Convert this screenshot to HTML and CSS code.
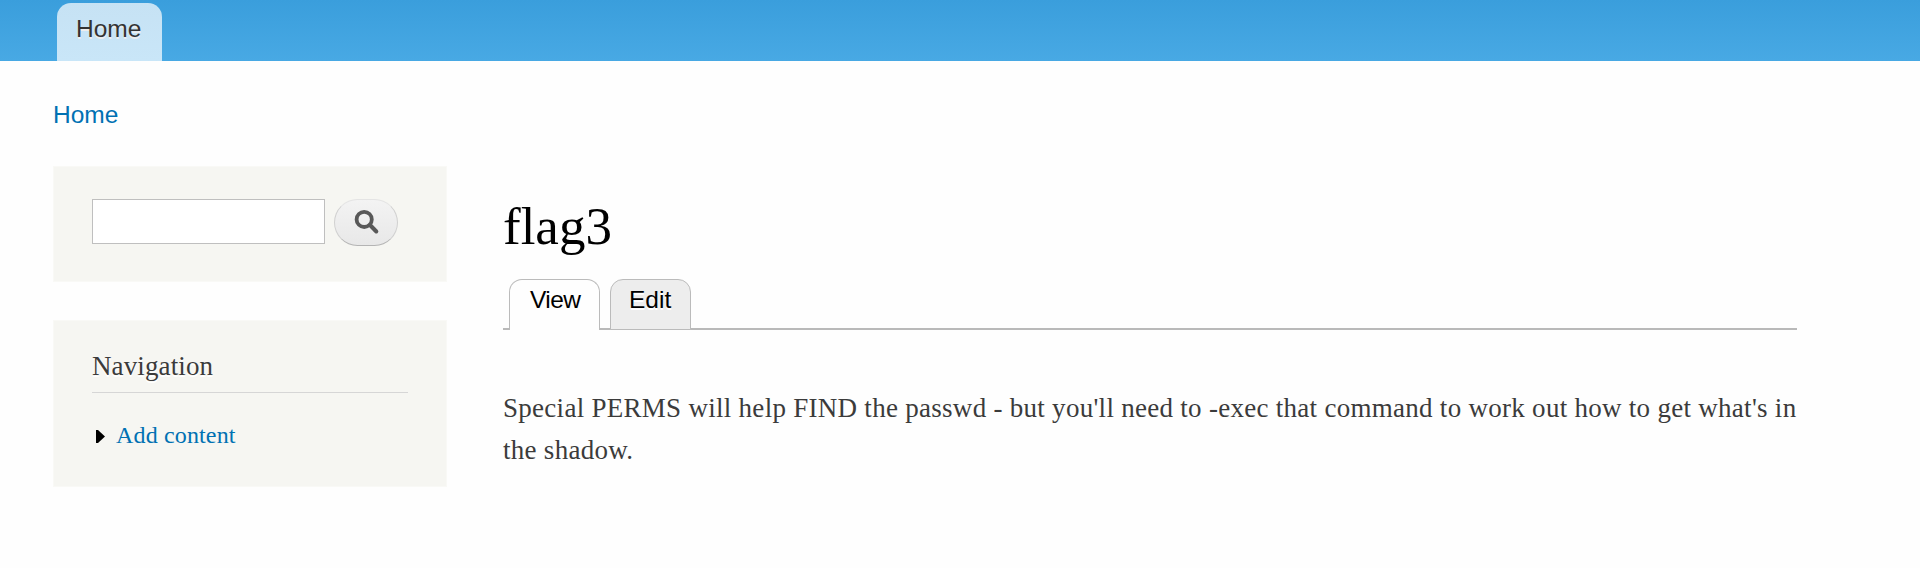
FILE: index.html
```html
<!DOCTYPE html>
<html lang="en">
<head>
<meta charset="utf-8">
<title>flag3</title>
<link rel="stylesheet" href="styles.css">
</head>
<body>
<header class="header"><nav><a class="menu-tab"><span class="menu-label">Home</span></a></nav></header>
<nav class="breadcrumb"><a class="crumb">Home</a></nav>
<div class="columns">
  <aside class="sidebar">
    <form class="block search">
      <input class="search-input" type="text" aria-label="Search">
      <button class="search-button" type="button" aria-label="Search">
        <svg class="search-icon" width="26" height="26" viewBox="0 0 26 26"><circle cx="10.2" cy="10.4" r="7.6" fill="none" stroke="#585858" stroke-width="3.8"/><path d="M16 16l6.3 6.5" stroke="#585858" stroke-width="4" stroke-linecap="round"/></svg>
      </button>
    </form>
    <section class="block navigation">
      <h2 class="block-title"><span class="block-title-text">Navigation</span></h2>
      <div class="nav-item"><svg class="arrow" width="9" height="13" viewBox="0 0 9 13"><path d="M0 0H2L9 6.5L2 13H0Z" fill="#000"/></svg><a class="nav-link">Add content</a></div>
    </section>
  </aside>
  <main class="content">
    <h1 class="title"><span class="title-text">flag3</span></h1>
    <div class="tabs"><a class="tab active"><span class="view-label">View</span></a><a class="tab edit"><span class="edit-label">Edit</span></a></div>
    <p class="body-text"><span class="line first">Special PERMS will help FIND the passwd - but you'll need to -exec that command to work out how to get what's in</span> <span class="line second">the shadow.</span></p>
  </main>
</div>
</body>
</html>
```
FILE: styles.css
```css
* { box-sizing: border-box; }
body { margin: 0; background: #fefefe; color: #3b3b3b; font-family: "Liberation Serif", serif; height: 568px; overflow: hidden; }
h1, h2, p { margin: 0; font-weight: normal; }
.header { height: 61px; padding: 3px 0 0 57px; background: linear-gradient(#3a9edc, #48a9e4); }
.menu-tab { display: block; width: 105px; height: 58px; padding: 11px 0 0 19px; border-radius: 14px 14px 0 0; background: linear-gradient(#c6e2f4, #c9e6f8); color: #333; font: 24.5px/30px "Liberation Sans", sans-serif; text-shadow: 0 2px 0 #eee; }
.breadcrumb { height: 105px; padding: 39px 0 0 53px; color: #0071b3; font: 24.5px/30px "Liberation Sans", sans-serif; }
.columns { display: flex; gap: 56px; padding-left: 53px; }
.sidebar { display: flex; flex-direction: column; gap: 38px; width: 394px; }
.block { background: #f6f6f2; border: 1px solid #f9f9f6; padding: 0 38px; }
.search { display: flex; gap: 9px; height: 116px; padding-top: 32px; }
.search-input { width: 233px; height: 45px; padding: 0; border: 1px solid #bfbfbf; background: #fff; }
.search-button { width: 64px; height: 47px; padding: 0 0 0 19px; border: 1px solid #d0d0d0; border-top-color: #e4e4e4; border-bottom-color: #b4b4b4; border-radius: 24px; background: linear-gradient(#f3f3f3, #e8e8e8); }
.search-icon { display: block; margin-bottom: 1px; }
.navigation { height: 167px; }
.block-title { width: 316px; height: 72px; padding-top: 29px; border-bottom: 1px solid #d6d6d6; font-size: 27px; line-height: 32px; letter-spacing: 0.12px; text-shadow: 0 2px 0 #fff; }
.nav-item { display: flex; align-items: center; gap: 11px; height: 32px; margin-top: 26px; padding-left: 4px; }
.arrow { margin-top: 2px; }
.nav-link { color: #0071b3; font-size: 24px; line-height: 32px; letter-spacing: 0.15px; }
.content { width: 1294px; }
.title { height: 113px; padding-top: 28px; color: #000; font-size: 53px; line-height: 64px; }
.tabs { display: flex; align-items: flex-end; gap: 10px; height: 51px; padding-left: 6px; border-bottom: 2px solid #b9b9b9; }
.tab { height: 51px; margin-bottom: -2px; padding-top: 5px; border: 1px solid #bbb; border-radius: 13px 13px 0 0; color: #000; font: 24.5px/30px "Liberation Sans", sans-serif; }
.active { width: 91px; padding-left: 20px; border-bottom: 0; background: #fefefe; letter-spacing: -0.6px; }
.edit { width: 81px; padding-left: 18px; background: #ededed; text-shadow: 0 2px 0 #fff; }
.body-text { padding-top: 57px; font-size: 27px; line-height: 42px; white-space: nowrap; letter-spacing: 0.28px; }
.line { display: table; }
```
